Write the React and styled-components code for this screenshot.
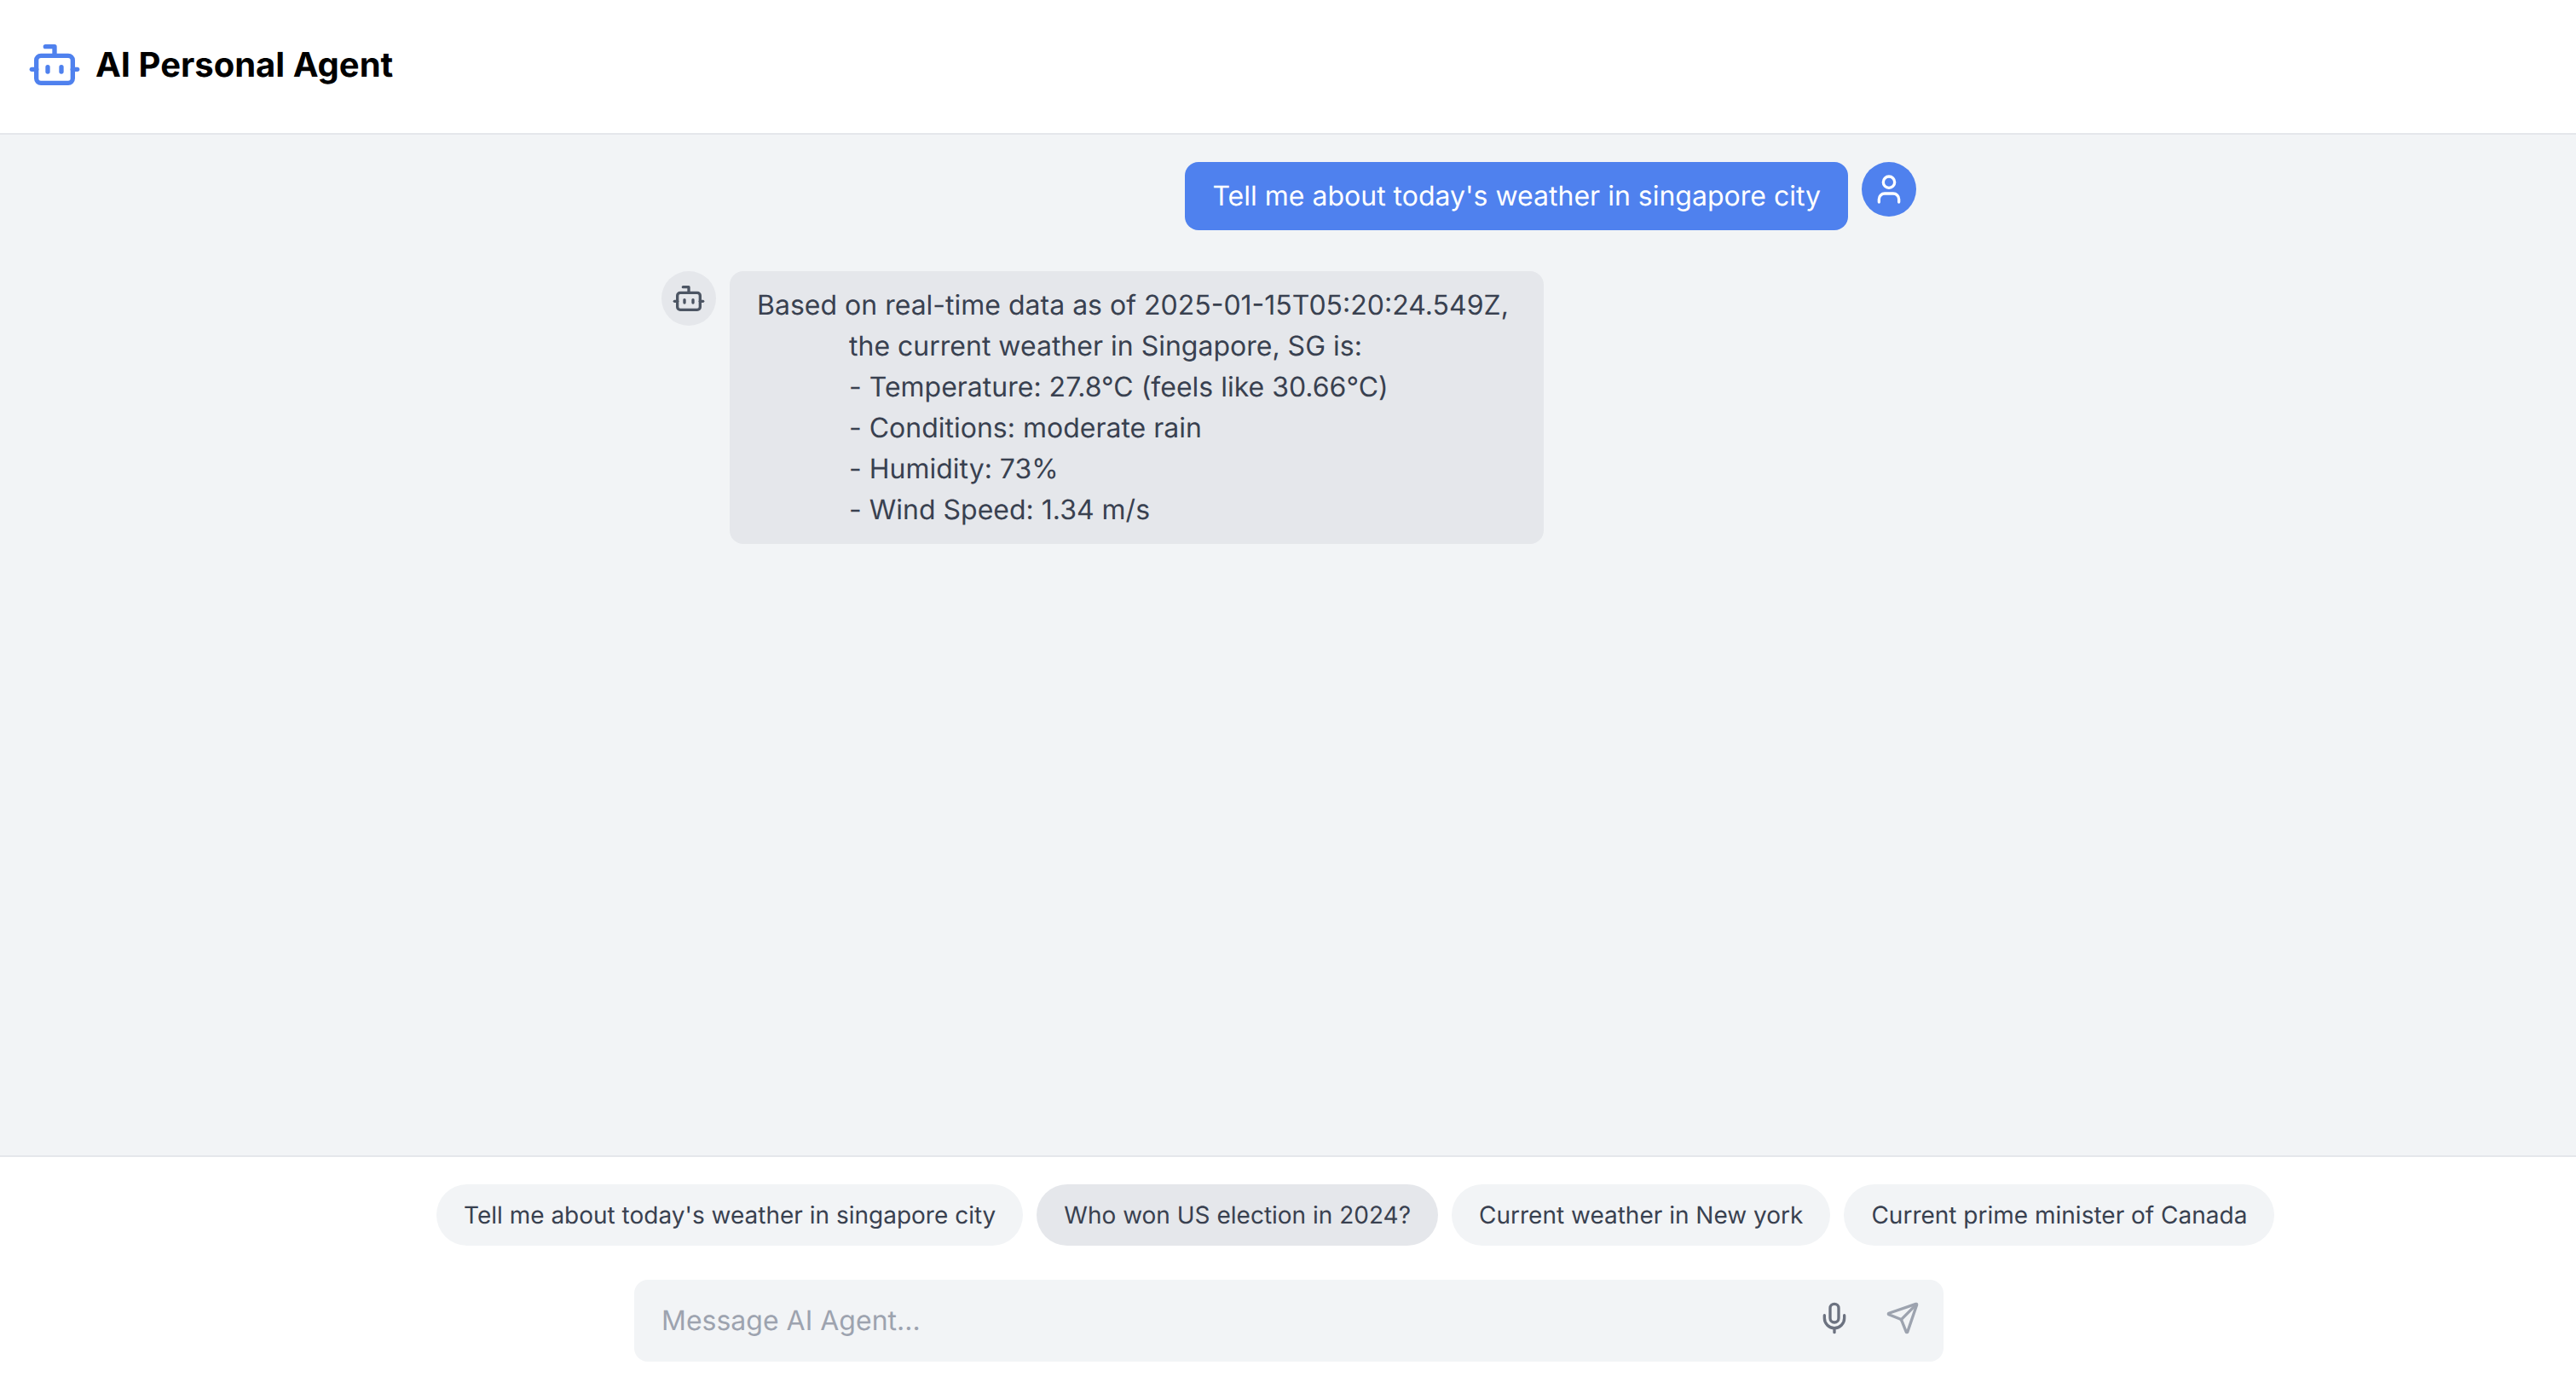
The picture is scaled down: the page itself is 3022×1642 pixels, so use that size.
import React, { useState } from "react";
import styled, { createGlobalStyle } from "styled-components";
import { Bot, Mic, Send, User } from "lucide-react";

const color = {
  blue: "#4f81ee",
  surface: "#f2f4f6",
  raised: "#e5e7eb",
  border: "#e5e7eb",
  text: "#394150",
  icon: "#4c5563",
  muted: "#6c7280",
  faint: "#9da3af",
};

const GlobalStyle = createGlobalStyle`
  *, *::before, *::after { box-sizing: border-box; }
  body {
    margin: 0;
    background: #fff;
    font-family: Inter, "Liberation Sans", sans-serif;
    font-size: 32px;
    line-height: 48px;
    text-rendering: geometricPrecision;
  }
  button, input {
    margin: 0;
    border: 0;
    padding: 0;
    background: none;
    font: inherit;
    color: inherit;
    text-rendering: inherit;
  }
  button { cursor: pointer; }
  svg { display: block; flex-shrink: 0; }
`;

const Page = styled.div`
  display: flex;
  flex-direction: column;
  min-height: 100vh;
`;

const Header = styled.header`
  display: flex;
  align-items: center;
  gap: 16px;
  padding: 44px 32px 48px;
  border-bottom: 2px solid ${color.border};
  color: ${color.blue};
`;

const Title = styled.h1`
  margin: 0;
  font-size: 40px;
  line-height: 56px;
  font-weight: 700;
  color: #000;
`;

const Chat = styled.main`
  flex: 1;
  padding: 32px 32px 32px 34px;
  background: ${color.surface};
`;

const Thread = styled.div`
  display: flex;
  flex-direction: column;
  gap: 48px;
  max-width: 1472px;
  margin: 0 auto;
`;

const Message = styled.article`
  display: flex;
  flex-direction: ${(p) => (p.$own ? "row-reverse" : "row")};
  align-items: flex-start;
  gap: 16px;
`;

const Avatar = styled.div`
  display: flex;
  align-items: center;
  justify-content: center;
  flex-shrink: 0;
  width: 64px;
  height: 64px;
  border-radius: 50%;
  background: ${(p) => (p.$own ? color.blue : color.raised)};
  color: ${(p) => (p.$own ? "#fff" : color.icon)};
`;

const Bubble = styled.div`
  padding: 16px 32px;
  border-radius: 16px;
  white-space: pre;
  background: ${(p) => (p.$own ? color.blue : color.raised)};
  color: ${(p) => (p.$own ? "#fff" : color.text)};
`;

/* List lines keep the leading dash at lowercase height before a capital. */
const Line = styled.p`
  margin: 0;
  font-feature-settings: ${(p) => (p.$listItem ? '"calt" 0' : "normal")};
`;

const Footer = styled.footer`
  display: flex;
  flex-direction: column;
  gap: 40px;
  padding: 32px 32px 45px 34px;
  border-top: 2px solid ${color.border};
`;

const Suggestions = styled.div`
  display: flex;
  gap: 16px;
  width: 100%;
  max-width: 2000px;
  margin: 0 auto;
`;

const Chip = styled.button`
  flex-shrink: 0;
  padding: 16px 32px;
  border-radius: 36px;
  font-size: 28px;
  line-height: 40px;
  white-space: nowrap;
  color: ${color.text};
  background: ${(p) => (p.$active ? color.raised : color.surface)};
`;

const Composer = styled.form`
  display: flex;
  align-items: center;
  width: 100%;
  max-width: 1536px;
  margin: 0 auto;
  padding-right: 12px;
  border-radius: 16px;
  background: ${color.surface};
`;

const MessageInput = styled.input`
  flex: 1;
  min-width: 0;
  padding: 24px 32px;
  line-height: 48px;
  color: ${color.text};
  outline: none;

  &::placeholder {
    color: ${color.faint};
    opacity: 1;
  }
`;

const Actions = styled.div`
  display: flex;
  gap: 8px;
  padding-bottom: 6px;
`;

const IconButton = styled.button`
  padding: 16px;
  color: ${(p) => (p.$dim ? color.faint : color.muted)};
`;

const messages = [
  { own: true, lines: ["Tell me about today's weather in singapore city"] },
  {
    own: false,
    lines: [
      "Based on real-time data as of 2025-01-15T05:20:24.549Z, ",
      "            the current weather in Singapore, SG is:",
      "            - Temperature: 27.8°C (feels like 30.66°C)",
      "            - Conditions: moderate rain",
      "            - Humidity: 73%",
      "            - Wind Speed: 1.34 m/s",
    ],
  },
];

const suggestions = [
  "Tell me about today's weather in singapore city",
  "Who won US election in 2024?",
  "Current weather in New york",
  "Current prime minister of Canada",
];

export default function App() {
  const [draft, setDraft] = useState("");

  return (
    <>
      <GlobalStyle />
      <Page>
        <Header>
          <Bot size={64} />
          <Title>AI Personal Agent</Title>
        </Header>
        <Chat>
          <Thread>
            {messages.map((m) => (
              <Message key={m.lines[0]} $own={m.own}>
                <Avatar $own={m.own}>
                  {m.own ? <User size={40} /> : <Bot size={40} />}
                </Avatar>
                <Bubble $own={m.own}>
                  {m.lines.map((line) => (
                    <Line key={line} $listItem={line.trim().startsWith("- ")}>
                      {line}
                    </Line>
                  ))}
                </Bubble>
              </Message>
            ))}
          </Thread>
        </Chat>
        <Footer>
          <Suggestions>
            {suggestions.map((s, i) => (
              <Chip key={s} type="button" $active={i === 1} onClick={() => setDraft(s)}>
                {s}
              </Chip>
            ))}
          </Suggestions>
          <Composer onSubmit={(e) => e.preventDefault()}>
            <MessageInput
              type="text"
              aria-label="Message AI Agent"
              placeholder="Message AI Agent..."
              value={draft}
              onChange={(e) => setDraft(e.target.value)}
            />
            <Actions>
              <IconButton type="button" aria-label="Record voice message">
                <Mic size={40} />
              </IconButton>
              <IconButton type="submit" aria-label="Send message" $dim>
                <Send size={40} />
              </IconButton>
            </Actions>
          </Composer>
        </Footer>
      </Page>
    </>
  );
}
